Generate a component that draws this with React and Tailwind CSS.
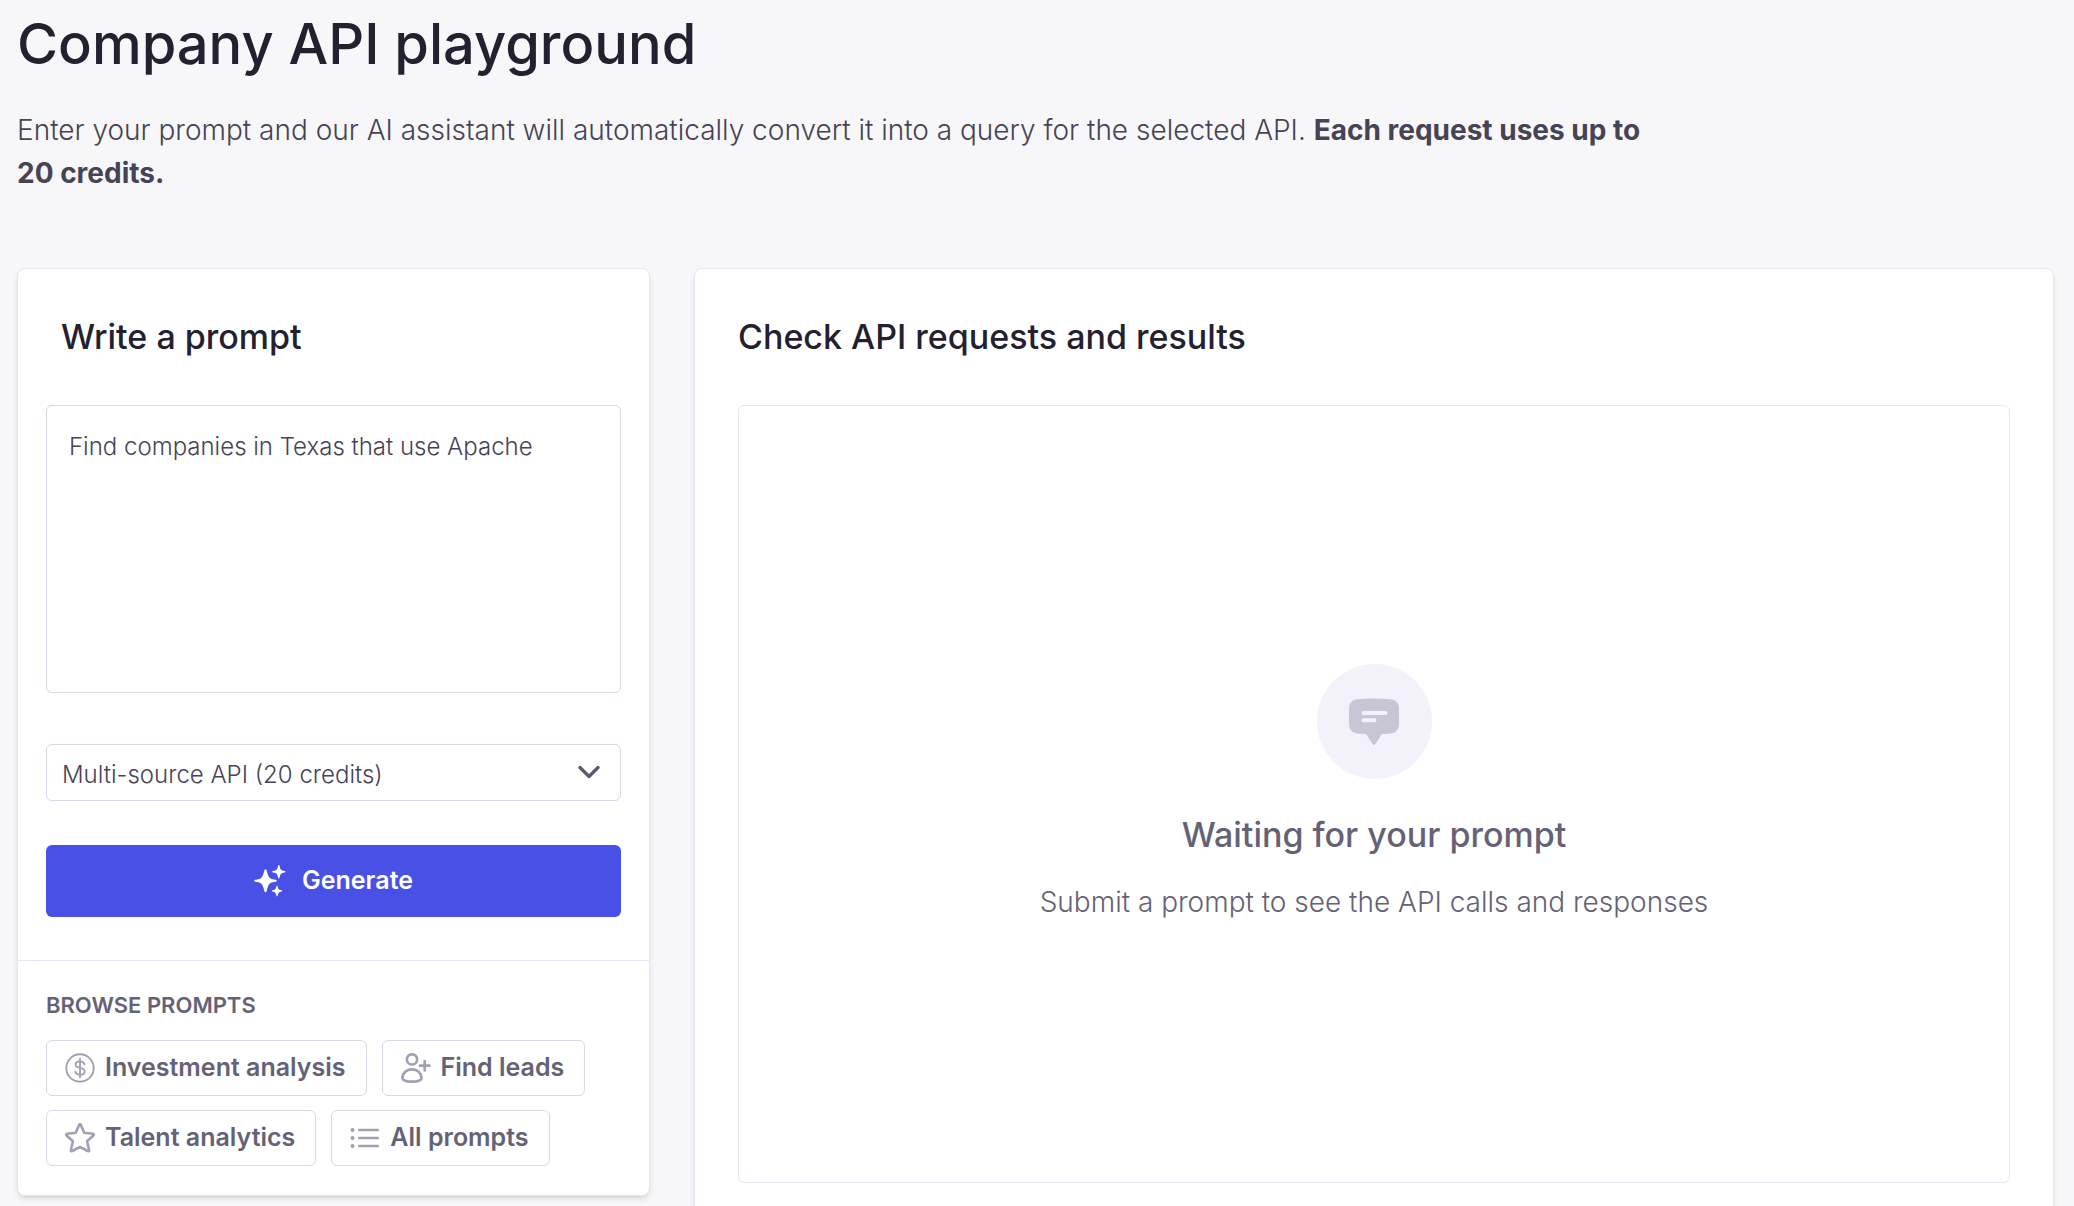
import React, { useState } from 'react';

const SparklesIcon = () => (
  <svg viewBox="0 0 32 32" className="size-8" fill="currentColor" aria-hidden="true">
    <path d="M11.5 4.2c.6 0 .9.4 1.1 1 1 4.600 2.200 7.400 4 8.300 1.200.6 2.800.9 4.900 1.200.7.1 1.200.4 1.200 1s-.5.9-1.200 1c-2.100.3-3.700.6-4.900 1.200-1.800.9-3 3.700-4 8.300-.2.6-.5 1-1.100 1s-.9-.4-1.100-1c-1-4.600-2.200-7.400-4-8.300-1.200-.6-2.800-.9-4.900-1.200-.7-.1-1.200-.4-1.200-1s.5-.9 1.200-1c2.100-.3 3.700-.6 4.900-1.200 1.800-.9 3-3.700 4-8.300.2-.6.500-1 1.100-1z" />
    <path d="M24.800 0c.4 0 .6.300.7.700.5 2.400 1.200 3.900 2.300 4.500.7.400 1.700.5 2.900.7.500.1.800.3.800.8s-.3.700-.8.800c-1.200.2-2.200.3-2.900.7-1.100.6-1.800 2.100-2.300 4.500-.1.400-.3.700-.7.700s-.6-.3-.7-.7c-.5-2.400-1.200-3.900-2.300-4.500-.7-.4-1.700-.5-2.900-.7-.5-.1-.8-.3-.8-.8s.3-.7.800-.8c1.200-.2 2.200-.3 2.900-.7 1.100-.6 1.800-2.100 2.300-4.500.1-.4.300-.7.700-.7z" />
    <path d="M23 20.600c.4 0 .5.200.6.600.4 1.900.9 3 1.700 3.500.5.300 1.300.4 2.300.6.400.1.600.3.600.7s-.2.500-.6.600c-1 .2-1.800.3-2.300.6-.8.500-1.300 1.600-1.700 3.500-.1.400-.2.600-.6.600s-.5-.2-.6-.6c-.4-1.900-.9-3-1.700-3.500-.5-.3-1.300-.4-2.300-.6-.4-.1-.6-.3-.6-.6s.2-.6.600-.7c1-.2 1.800-.3 2.300-.6.800-.5 1.300-1.600 1.700-3.500.1-.4.200-.6.600-.6z" />
  </svg>
);

const DollarIcon = () => (
  <svg viewBox="0 0 30 30" className="size-[30px]" fill="none" stroke="currentColor" strokeWidth="1.900" strokeLinecap="round" aria-hidden="true">
    <circle cx="15" cy="15" r="13.700" />
    <path d="M19.400 11.300c-.5-1.900-2.200-2.900-4.400-2.900-2.600 0-4.400 1.200-4.400 3.100 0 2.100 1.800 2.800 4.400 3.400 2.800.6 4.700 1.500 4.700 3.500s-2 3.300-4.700 3.300c-2.400 0-4.300-1.100-4.800-3.100M15 5.700v18.600" />
  </svg>
);

const UserPlusIcon = () => (
  <svg viewBox="0 0 30 30" className="size-[30px]" fill="none" stroke="currentColor" strokeWidth="2.700" strokeLinecap="round" strokeLinejoin="round" aria-hidden="true">
    <circle cx="11" cy="6.400" r="5.100" />
    <path d="M11 16.300c5.600 0 9.600 4.200 9.600 8.700 0 2.200-4.400 3.700-9.600 3.700s-9.700-1.500-9.700-3.700c0-4.500 4-8.700 9.700-8.700zM23.700 8v9.400M19 12.700h9.400" />
  </svg>
);

const StarIcon = () => (
  <svg viewBox="0 0 30 30" className="size-[30px]" fill="none" stroke="currentColor" strokeWidth="2.600" strokeLinejoin="round" aria-hidden="true">
    <path d="M14.100 1.900c.4-.8 1.400-.8 1.800 0l3.300 7.800 8.600 1c1 .1 1.300 1.200.6 1.800l-6.300 5.700 2 8.800c.2 1-.6 1.500-1.400 1l-7.700-4-7.700 4c-.8.500-1.600 0-1.400-1l2-8.800-6.300-5.700c-.7-.6-.4-1.700.6-1.800l8.600-1z" />
  </svg>
);

const ListIcon = () => (
  <svg viewBox="0 0 30 30" className="size-[30px]" fill="none" stroke="currentColor" strokeWidth="2.600" strokeLinecap="round" aria-hidden="true">
    <path d="M9.300 7h18.500M9.300 15h18.500M9.300 23h18.500" />
    <path strokeWidth="4" d="M2.500 7h.01M2.500 15h.01M2.500 23h.01" />
  </svg>
);

const ChatIcon = () => (
  <svg viewBox="0 0 52 48" className="h-12 w-[52px]" aria-hidden="true">
    <path fill="#c8c5d5" d="M9.500 1.200C20.500.2 31.500.2 42.500 1.200 48 1.800 51 5.200 51 10.300v15.400c0 5.600-3.300 9.200-8.600 9.800-2.900.4-5.400.6-8.600.7l-6.600 10c-.6.9-1.800.9-2.400 0l-6.600-10c-3.200-.1-5.700-.3-8.600-.7C4.300 34.900 1 31.300 1 25.700V10.300C1 5.200 4 1.800 9.500 1.200z" />
    <path stroke="#f3f1fa" strokeWidth="4" strokeLinecap="round" d="M15.500 15h22M15.500 22.300h11" />
  </svg>
);

const promptCategories = [
  { label: 'Investment analysis', Icon: DollarIcon },
  { label: 'Find leads', Icon: UserPlusIcon },
  { label: 'Talent analytics', Icon: StarIcon },
  { label: 'All prompts', Icon: ListIcon },
];

const PromptPanel = () => {
  const [prompt, setPrompt] = useState('Find companies in Texas that use Apache');

  return (
    <section className="rounded-lg border border-[#e8e6f4] bg-white shadow-md">
      <div className="px-7 pt-12 pb-[43px]">
        <h2 className="ml-[15px] text-[34px] leading-10 font-medium text-[#232130]">
          <label htmlFor="prompt">Write a prompt</label>
        </h2>
        <textarea
          id="prompt"
          value={prompt}
          onChange={(e) => setPrompt(e.target.value)}
          className="mt-12 block h-72 w-full resize-none rounded-md border border-[#dad7ea] px-[22px] py-[25px] text-2xl font-light text-[#464355] outline-none"
        />
        <div className="relative mt-[51px]">
          <select
            aria-label="API"
            className="block h-[57px] w-full appearance-none rounded-md border border-[#dad7ea] bg-white px-[15px] pt-1 text-2xl font-light text-[#464355] outline-none"
          >
            <option>Multi-source API (20 credits)</option>
          </select>
          <svg viewBox="0 0 24 16" className="pointer-events-none absolute top-5 right-5 h-4 w-6" fill="none" stroke="#5c596d" strokeWidth="3.300" strokeLinecap="round" strokeLinejoin="round" aria-hidden="true">
            <path d="M3 3.500l9 9 9-9" />
          </svg>
        </div>
        <button
          type="button"
          className="mt-11 flex h-[72px] w-full items-center justify-center gap-4 rounded-md bg-[#4850e6] text-[25px] font-semibold text-white"
        >
          <SparklesIcon />
          Generate
        </button>
      </div>

      <div className="border-t border-[#e8e6f4] px-7 pt-7 pb-[29px]">
        <h3 className="text-[22px] leading-8 font-semibold text-[#656276] uppercase">Browse prompts</h3>
        <div className="mt-[19px] flex flex-wrap gap-x-[15px] gap-y-3.5">
          {promptCategories.map(({ label, Icon }) => (
            <button
              key={label}
              type="button"
              className="flex h-14 items-center gap-2.5 rounded-md border border-[#dad7ea] pr-5 pl-[18px] text-[25px] font-semibold text-[#656276]"
            >
              <span className="text-[#a3a0b5]">
                <Icon />
              </span>
              {label}
            </button>
          ))}
        </div>
      </div>
    </section>
  );
};

const ResultsPanel = () => (
  <section className="rounded-lg border border-[#e8e6f4] bg-white px-[43px] pt-12 pb-11 shadow-md">
    <h2 className="text-[34px] leading-10 font-medium text-[#232130]">Check API requests and results</h2>
    <div className="mt-12 flex h-[778px] flex-col items-center justify-center rounded-md border border-[#e8e6f4] text-[#656276]">
      <div className="flex size-[115px] items-center justify-center rounded-full bg-[#f3f1fa]">
        <ChatIcon />
      </div>
      <h3 className="mt-9 text-[34px] leading-10 font-medium">Waiting for your prompt</h3>
      <p className="mt-[26px] text-[28px] leading-[43px] font-light">
        Submit a prompt to see the API calls and responses
      </p>
    </div>
  </section>
);

function App() {
  return (
    <main className="h-screen overflow-hidden bg-[#f7f7f9] pt-2 pr-5 pl-[17px] font-['Inter',sans-serif]">
      <h1 className="text-[56px] leading-[72px] font-medium text-[#232130]">Company API playground</h1>
      <p className="mt-[29px] w-4/5 text-[28px] leading-[43px] font-light text-[#464355]">
        Enter your prompt and our AI assistant will automatically convert it into a query for the selected API.{' '}
        <strong className="font-bold">Each request uses up to 20 credits.</strong>
      </p>
      <div className="mt-[73px] grid grid-cols-[633fr_1360fr] items-start gap-11">
        <PromptPanel />
        <ResultsPanel />
      </div>
    </main>
  );
}

export default App;
